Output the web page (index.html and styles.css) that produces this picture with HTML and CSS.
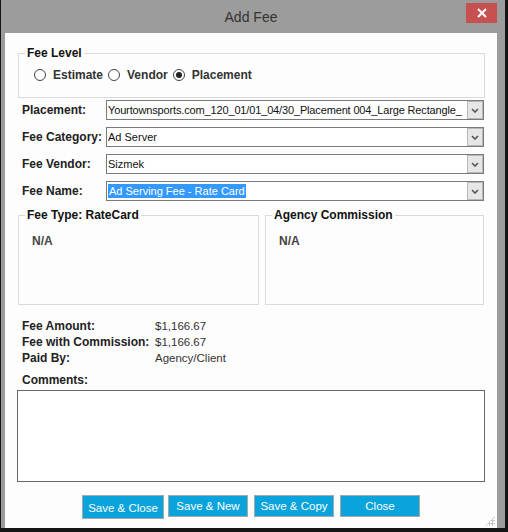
FILE: index.html
```html
<!DOCTYPE html>
<html lang="en">
<head>
  <meta charset="UTF-8">
  <title>Add Fee</title>
  <link rel="stylesheet" href="styles.css">
</head>
<body>
  <div class="window">
    <div class="titlebar">
      <span class="title">Add Fee</span>
      <button class="close-btn" aria-label="Close">
        <svg width="10" height="10" viewBox="0 0 10 10"><path d="M1 1 L9 9 M9 1 L1 9" stroke="#fff" stroke-width="2"/></svg>
      </button>
    </div>
    <div class="client">
      <fieldset class="group level">
        <legend>Fee Level</legend>
        <div class="radios">
          <label class="radio"><span class="dot"></span>Estimate</label>
          <label class="radio"><span class="dot"></span>Vendor</label>
          <label class="radio"><span class="dot checked"></span>Placement</label>
        </div>
      </fieldset>

      <div class="row first">
        <span class="lbl">Placement:</span>
        <div class="combo"><span class="val long">Yourtownsports.com_120_01/01_04/30_Placement 004_Large Rectangle_</span><span class="arrow"><svg width="8" height="5" viewBox="0 0 8 5"><path d="M1 1 L4 4 L7 1" fill="none" stroke="#555" stroke-width="1.6"/></svg></span></div>
      </div>
      <div class="row">
        <span class="lbl">Fee Category:</span>
        <div class="combo"><span class="val">Ad Server</span><span class="arrow"><svg width="8" height="5" viewBox="0 0 8 5"><path d="M1 1 L4 4 L7 1" fill="none" stroke="#555" stroke-width="1.6"/></svg></span></div>
      </div>
      <div class="row">
        <span class="lbl">Fee Vendor:</span>
        <div class="combo"><span class="val">Sizmek</span><span class="arrow"><svg width="8" height="5" viewBox="0 0 8 5"><path d="M1 1 L4 4 L7 1" fill="none" stroke="#555" stroke-width="1.6"/></svg></span></div>
      </div>
      <div class="row">
        <span class="lbl">Fee Name:</span>
        <div class="combo"><span class="val"><span class="selected">Ad Serving Fee - Rate Card</span></span><span class="arrow"><svg width="8" height="5" viewBox="0 0 8 5"><path d="M1 1 L4 4 L7 1" fill="none" stroke="#555" stroke-width="1.6"/></svg></span></div>
      </div>

      <div class="pair">
        <fieldset class="group box type">
          <legend>Fee Type: RateCard</legend>
          <div class="na">N/A</div>
        </fieldset>
        <fieldset class="group box commission">
          <legend>Agency Commission</legend>
          <div class="na">N/A</div>
        </fieldset>
      </div>

      <div class="summary">
        <span class="key">Fee Amount:</span><span class="num">$1,166.67</span>
        <span class="key">Fee with Commission:</span><span class="num">$1,166.67</span>
        <span class="key">Paid By:</span><span class="num">Agency/Client</span>
      </div>

      <div class="comments-lbl">Comments:</div>
      <div class="comments"></div>

      <div class="actions">
        <button class="btn focus">Save &amp; Close</button>
        <button class="btn">Save &amp; New</button>
        <button class="btn">Save &amp; Copy</button>
        <button class="btn">Close</button>
      </div>
      <div class="grip"></div>
    </div>
  </div>
</body>
</html>
```

FILE: styles.css
```css
body {
  margin: 0;
  background-color: #151515;
  font-family: "Liberation Sans", Arial, sans-serif;
  font-size: 11px;
  color: #222;
}

.window {
  width: 504px;
  height: 528px;
  margin-left: 1px;
  background-color: #9c9c9c;
  display: flex;
  flex-direction: column;
}

.titlebar {
  height: 33px;
  position: relative;
  display: flex;
  align-items: center;
  justify-content: center;
}

.title {
  font-size: 14px;
  color: #333;
  margin-left: -4px;
  margin-top: 1px;
}

.close-btn {
  position: absolute;
  top: 3px;
  left: 465px;
  width: 31px;
  height: 20px;
  border: none;
  padding: 0;
  background-color: #c75050;
  display: flex;
  align-items: center;
  justify-content: center;
}

.client {
  position: relative;
  margin-left: 4px;
  width: 492px;
  flex: 1;
  background-color: #fdfdfd;
  padding: 13px 12px 0 13px;
  box-sizing: border-box;
}

.group {
  margin: 0;
  border: 1px solid #dadada;
  box-sizing: border-box;
}

.group legend {
  padding: 0 2px;
  font-weight: bold;
  font-size: 12px;
  line-height: 14px;
  color: #111;
}

.level {
  height: 52px;
  padding: 7px 0 0 15px;
}

.level legend {
  margin-left: -9px;
}

.radios {
  display: flex;
  align-items: center;
  height: 16px;
}

.radio {
  display: flex;
  align-items: center;
  font-weight: bold;
  font-size: 12px;
  color: #333;
  margin-right: 5px;
}

.dot {
  width: 12px;
  height: 12px;
  border: 1px solid #444;
  border-radius: 50%;
  box-sizing: border-box;
  margin-right: 7px;
  background: #fff;
  position: relative;
}

.dot.checked::after {
  content: "";
  position: absolute;
  left: 2px;
  top: 2px;
  width: 6px;
  height: 6px;
  border-radius: 50%;
  background: #222;
}

.row {
  display: flex;
  align-items: center;
  height: 20px;
  margin-top: 7px;
}

.row.first {
  margin-top: 2px;
}

.lbl {
  width: 84px;
  flex-shrink: 0;
  padding-left: 4px;
  font-weight: bold;
  font-size: 12px;
  color: #222;
}

.combo {
  flex: 1;
  min-width: 0;
  height: 20px;
  margin-right: 1px;
  border: 1px solid #7a7a7a;
  box-sizing: border-box;
  background: #fff;
  display: flex;
  align-items: stretch;
}

.val {
  flex: 1;
  min-width: 0;
  padding-left: 1px;
  line-height: 18px;
  font-size: 11px;
  color: #111;
  white-space: nowrap;
  overflow: hidden;
}

.val.long {
  letter-spacing: -0.15px;
}

.selected {
  background-color: #3399ff;
  color: #fff;
  padding: 1px 1px;
}

.arrow {
  width: 16px;
  flex-shrink: 0;
  border: 1px solid #b8b8b8;
  background: #e6e6e6;
  display: flex;
  align-items: center;
  justify-content: center;
  box-sizing: border-box;
}

.pair {
  display: flex;
  gap: 6px;
  margin-top: 7px;
}

.box {
  height: 97px;
  padding: 12px 0 0 13px;
}

.box legend {
  margin-left: -7px;
}

.type {
  width: 241px;
}

.commission {
  width: 219px;
}

.na {
  font-weight: bold;
  font-size: 12px;
  line-height: 14px;
  color: #444;
}

.summary {
  display: grid;
  grid-template-columns: 133px auto;
  margin: 13px 0 0 4px;
  line-height: 16px;
}

.key {
  font-weight: bold;
  font-size: 12px;
  color: #222;
}

.num {
  font-size: 11.5px;
  color: #333;
}

.comments-lbl {
  margin: 7px 0 0 4px;
  font-weight: bold;
  font-size: 12px;
  line-height: 14px;
  color: #222;
}

.comments {
  height: 92px;
  margin: 3px 0 0 -1px;
  width: 468px;
  border: 1px solid #666;
  box-sizing: border-box;
  background: #fff;
}

.actions {
  display: flex;
  align-items: flex-start;
  margin: 13px 0 0 64px;
}

.btn {
  width: 80px;
  height: 22px;
  margin-right: 6px;
  padding: 0;
  border: 1px solid #a8a8a8;
  background-color: #0aa3dc;
  color: #fff;
  font-family: "Liberation Sans", Arial, sans-serif;
  font-size: 11.5px;
}

.btn.focus {
  width: 82px;
  height: 24px;
  margin-right: 4px;
  padding-top: 2px;
}

.grip {
  position: absolute;
  right: 2px;
  bottom: 2px;
  width: 10px;
  height: 10px;
  background-image: radial-gradient(circle, #c4c4c4 1px, transparent 1.2px);
  background-size: 3px 3px;
  clip-path: polygon(100% 0, 100% 100%, 0 100%);
}
```
